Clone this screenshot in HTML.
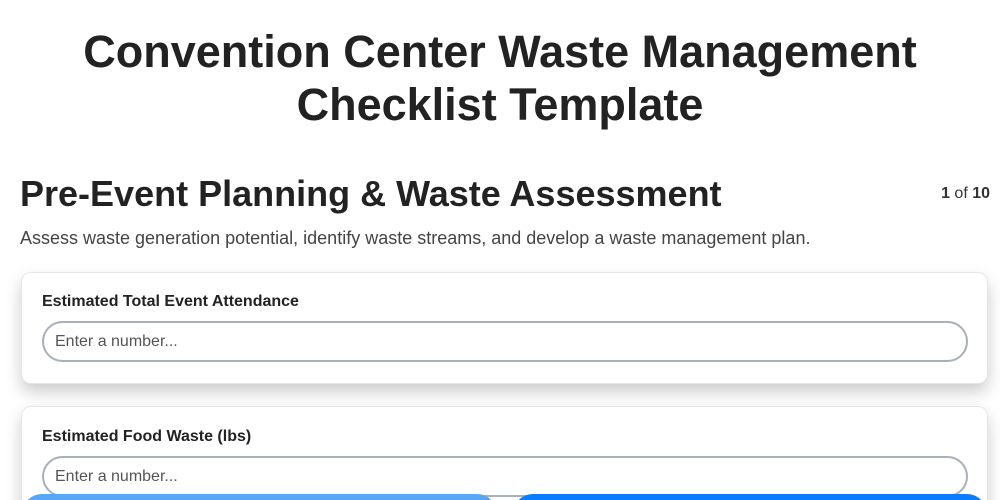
<!DOCTYPE html>
<html><head><style>
html,body{margin:0;width:1000px;height:500px;overflow:hidden}
body{background:#fff;font-family:"Liberation Sans",sans-serif;color:#222;position:relative}
h1{position:absolute;top:25px;left:0;width:1000px;margin:0;text-align:center;font-size:45px;line-height:53px;font-weight:bold;color:#222}
h2{position:absolute;left:20px;top:172px;margin:0;font-size:36px;line-height:44px;font-weight:bold;color:#222}
.pg{position:absolute;right:10px;top:185px;font-size:16px;color:#333}
.sub{position:absolute;left:20px;top:228px;font-size:18px;color:#444}
.card{position:absolute;left:21px;width:965px;background:#fff;border:1px solid #e6e6ea;border-radius:10px;box-shadow:0 8px 16px rgba(0,0,0,.2)}
.lab{position:absolute;left:20px;font-size:16px;font-weight:bold;color:#222}
.inp{position:absolute;left:20px;height:37px;border:2px solid #a9b0b9;border-radius:21px;font-size:16px;color:#555;line-height:37px;padding-left:11px;box-sizing:content-box}
.b{position:absolute;top:494px;height:40px;border-radius:20px}
</style></head><body>
<h1>Convention Center Waste Management<br>Checklist Template</h1>
<h2>Pre-Event Planning &amp; Waste Assessment</h2>
<div class="pg"><b>1</b> of <b>10</b></div>
<div class="sub">Assess waste generation potential, identify waste streams, and develop a waste management plan.</div>
<div class="card" style="top:272px;height:110px">
<div class="lab" style="top:20px">Estimated Total Event Attendance</div>
<div class="inp" style="top:48px;width:911px">Enter a number...</div>
</div>
<div class="card" style="top:406px;height:120px">
<div class="lab" style="top:21px">Estimated Food Waste (lbs)</div>
<div class="inp" style="top:49px;width:911px">Enter a number...</div>
</div>
<div class="b" style="left:22px;width:475px;background:#59a6f7"></div>
<div class="b" style="left:513px;width:474px;background:#0a7cff"></div>
</body></html>
